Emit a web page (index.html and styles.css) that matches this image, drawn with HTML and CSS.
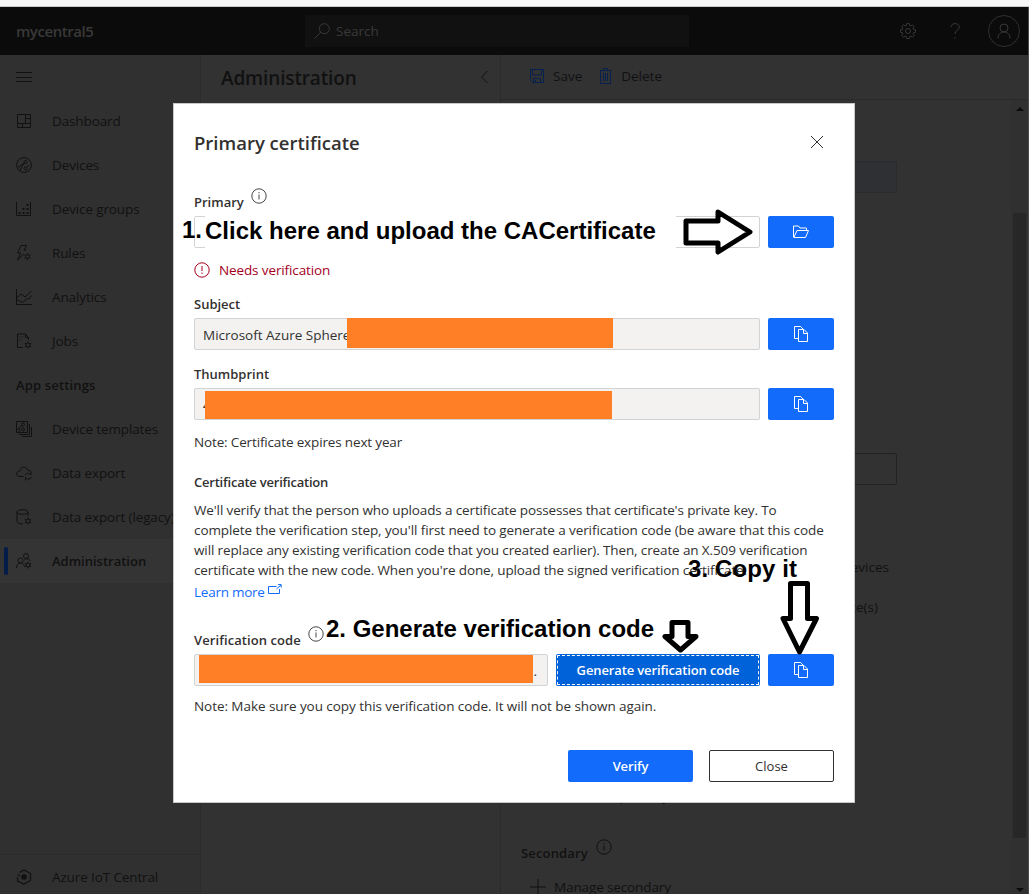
FILE: index.html
```html
<!DOCTYPE html>
<html lang="en">
<head>
<meta charset="utf-8">
<title>mycentral5 - Administration</title>
<link rel="stylesheet" href="styles.css">
</head>
<body>
<svg class="defs" width="0" height="0">
  <symbol id="copy" viewBox="0 0 16 16"><path d="M5 12.500H1.500V.5h6l2 2M5.500 3.500h5.500l3.500 3.500v8.500h-9zM10.500 3.500v4h4M7.500.5l3 3"/></symbol>
  <symbol id="info" viewBox="0 0 16 16"><circle cx="8" cy="8" r="7.200"/><path d="M8 6.500v5M8 4v1.200"/></symbol>
  <symbol id="cog" viewBox="0 0 8 8"><circle cx="4" cy="4" r="2"/><path d="M4 .5V2M4 6v1.500M.9 2.200l1.300.8M5.800 5l1.300.8M.9 5.800l1.300-.8M5.800 3l1.300-.8"/></symbol>
</svg>
<div class="screen">
  <div class="browser-edge"></div>
  <header class="topbar">
    <span class="brand">mycentral5</span>
    <div class="search"><svg class="ic" viewBox="0 0 16 16"><circle cx="10.300" cy="5.700" r="5"/><path d="M6.800 9.200L.5 15.500"/></svg><span>Search</span></div>
    <div class="top-actions">
      <svg class="ic gear" viewBox="0 0 16 16"><circle cx="8" cy="8" r="2.500"/><path d="M6.700.6h2.600l.4 2 1 .4 1.700-1.100 1.800 1.800-1.200 1.700.5 1.100 2 .3v2.500l-2 .4-.5 1 1.200 1.700-1.800 1.800-1.700-1.100-1 .4-.4 2H6.700l-.4-2-1.100-.4-1.700 1.100-1.800-1.800 1.100-1.700-.4-1-2-.4V6.800l2-.3.4-1.100-1.100-1.700 1.800-1.800L5.200 3l1.100-.4z"/></svg>
      <svg class="ic help" viewBox="0 0 16 16"><path d="M4 4.200C4 2 5.500.6 8 .6s4.300 1.400 4.300 3.500C12.300 7.300 8 7 8 11M8 14v1.500"/></svg>
      <span class="avatar"><svg class="ic" viewBox="0 0 16 16"><circle cx="8" cy="5" r="4"/><path d="M2 15.500C2 11.500 4.500 9 8 9s6 2.500 6 6.500"/></svg></span>
    </div>
  </header>
  <div class="main">
    <nav class="sidebar">
      <div class="item"><svg class="ic" viewBox="0 0 16 16"><path d="M0 3.500h16M0 8.500h16M0 12.500h16"/></svg></div>
      <div class="item"><svg class="ic" viewBox="0 0 16 16"><path d="M1.500 1.500h13v13h-13zM9.500 1.500v9M1.500 10.500h13M9.500 5.500h5M6.500 10.500v4"/></svg><span>Dashboard</span></div>
      <div class="item"><svg class="ic" viewBox="0 0 16 16"><circle cx="8" cy="8" r="7.400"/><circle cx="9.500" cy="5" r="1.500"/><circle cx="9.500" cy="11.500" r="1.500"/><path d="M2 10.500L8.300 6M4 14l2-5 2.500-2.500M11 10.500l1.500-2.500"/></svg><span>Devices</span></div>
      <div class="item"><svg class="ic" viewBox="0 0 16 16"><path d="M.5 1v13.500h14V1"/><path class="dots" d="M2.500 12h2M6.500 12h2M10.500 12h2M6.500 8h2M10.500 8h2M10.500 4h2"/></svg><span>Device groups</span></div>
      <div class="item"><svg class="ic" viewBox="0 0 16 16"><path d="M5 .5h5.500L8 5h2.500M5 .5L1.500 8H5l-3.500 7L8 9"/><use href="#cog" x="7.500" y="7.500" width="8" height="8"/></svg><span>Rules</span></div>
      <div class="item"><svg class="ic" viewBox="0 0 16 16"><path d="M.5 0v15.500H16M.5 9l4.500-4 4 3 6.500-6M.5 10.500l6 3 5-4h2l2-3"/></svg><span>Analytics</span></div>
      <div class="item"><svg class="ic" viewBox="0 0 16 16"><path d="M7 14.500H1.500V1h8l3 3.500V7M9.500 1v3.500h3M3.500 4h1M6 4h1M3.500 7h1"/><use href="#cog" x="8" y="8" width="8" height="8"/></svg><span>Jobs</span></div>
      <div class="item section">App settings</div>
      <div class="item"><svg class="ic" viewBox="0 0 16 16"><path d="M.5.5h11v11H.5zM13.500 3v10.500H3M15.500 6v9.500H6"/><circle cx="7" cy="3.500" r="1.500"/><circle cx="7" cy="8.500" r="1.500"/><path d="M1 9l5-4.500M3 11l1-3"/></svg><span>Device templates</span></div>
      <div class="item"><svg class="ic" viewBox="0 0 16 16"><path d="M7.500 11.500H4C-.5 11.500-.5 6 4 6 4.500 1 11 1 12 5.500c1.500 0 3 .5 3.500 2M9 10.500c1-2.500 4-3 6-.5V7.500M15.500 12c-1 2.500-4 3-6 .5v3"/></svg><span>Data export</span></div>
      <div class="item"><svg class="ic" viewBox="0 0 16 16"><ellipse cx="6.500" cy="3" rx="5.500" ry="2.400"/><path d="M1 3v9.500C1 14 4 15 7 14.800M12 3v4"/><use href="#cog" x="8" y="8" width="8" height="8"/></svg><span>Data export (legacy)</span></div>
      <div class="item active"><svg class="ic" viewBox="0 0 16 16"><circle cx="10" cy="3" r="2.500"/><circle cx="4.500" cy="7.500" r="2.500"/><path d="M.5 15c0-6.500 7-6.500 8-1.500M8 7.500C9.500 5 13 5 14.500 8"/><use href="#cog" x="8" y="8" width="8" height="8"/></svg><span>Administration</span></div>
      <div class="item foot"><svg class="ic hub" viewBox="0 0 16 16"><path d="M1.500 8v4L8 15l6.500-3.500v-7L8 1 3.500 3.500M1.500 5.500L4 7"/><circle class="solid" cx="8" cy="8" r="2.800"/></svg><span>Azure IoT Central</span></div>
    </nav>
    <section class="subnav"><h1>Administration</h1><svg class="back" viewBox="0 0 8 14"><path d="M7.500 1L1.500 7l6 6"/></svg></section>
    <section class="content">
      <div class="toolbar">
        <svg class="ic blue" viewBox="0 0 16 16"><path d="M1.500 1.500h13v13h-11l-2-2zM3.500 1.500v5.500h9V1.500M4.500 14.500v-4h7v4M6.500 12v2.500"/></svg><span>Save</span>
        <svg class="ic blue del" viewBox="0 0 16 16"><path d="M2.500 2.500h12M6.500 2V.5h4V2M3.500 2.500v13h10v-13M6.500 5v8M8.500 5v8M10.500 5v8"/></svg><span>Delete</span>
      </div>
      <div class="pane">
        <div class="page-body">
          <div class="bg-input selected"></div>
          <div class="bg-input outlined"></div>
          <div class="bg-text devices">Auto-approve new devices</div>
          <div class="bg-text certs">Manage certificate(s)</div>
          <div class="bg-text primary">Delete primary</div>
          <div class="bg-label">Secondary <svg class="ic info"><use href="#info"/></svg></div>
          <div class="bg-manage"><svg class="ic" viewBox="0 0 16 16"><path d="M8 0v16M0 8h16"/></svg><span>Manage secondary</span></div>
        </div>
        <div class="scrollbar"><i class="up"></i><div class="thumb"></div><i class="down"></i></div>
      </div>
    </section>
  </div>
</div>

<div class="modal">
  <div class="modal-head"><h2>Primary certificate</h2><svg class="x" viewBox="0 0 14 14"><path d="M1 1l12 12M13 1L1 13"/></svg></div>
  <div class="label first"><span>Primary</span><svg class="ic info"><use href="#info"/></svg></div>
  <div class="row"><div class="field blank"></div><button class="btn icon"><svg class="ic" viewBox="0 0 16 16"><path d="M.5 13V2h5l1.500 2h6.500v2.500M.8 13.500L4 6.500h11.500l-3 7z"/></svg></button></div>
  <div class="error"><svg class="ic" viewBox="0 0 16 16"><circle cx="8" cy="8" r="7.200"/><path d="M8 4v5M8 10.500V12"/></svg><span>Needs verification</span></div>
  <div class="label"><span>Subject</span></div>
  <div class="row"><div class="field"><span>Microsoft Azure Sphere</span></div><button class="btn icon"><svg class="ic"><use href="#copy"/></svg></button></div>
  <div class="label thumbprint"><span>Thumbprint</span></div>
  <div class="row"><div class="field"><span>4</span></div><button class="btn icon"><svg class="ic"><use href="#copy"/></svg></button></div>
  <p class="note n1">Note: Certificate expires next year</p>
  <h3>Certificate verification</h3>
  <p class="copytext"><span class="l1">We'll verify that the person who uploads a certificate possesses that certificate's private key. To</span><br><span class="l2">complete the verification step, you'll first need to generate a verification code (be aware that this code</span><br><span class="l3">will replace any existing verification code that you created earlier). Then, create an X.509 verification</span><br><span class="l4">certificate with the new code. When you're done, upload the signed verification certificate.</span></p>
  <div class="learn"><span>Learn more</span><svg viewBox="0 0 14 12"><path d="M8.500 2.500H.5v7h11V5M8.500 5L13 1M10 .6h3.200v3"/></svg></div>
  <div class="label code"><span>Verification code</span><svg class="ic info"><use href="#info"/></svg></div>
  <div class="row"><div class="field codebox"><span>.</span></div><button class="btn generate"><span>Generate verification code</span></button><button class="btn icon"><svg class="ic"><use href="#copy"/></svg></button></div>
  <p class="note n2">Note: Make sure you copy this verification code. It will not be shown again.</p>
  <div class="actions"><button class="btn verify">Verify</button><button class="btn close">Close</button></div>
</div>

<div class="annotations">
  <div class="redact r1"></div><div class="redact r2"></div><div class="redact r3"></div>
  <div class="patch"></div>
  <span class="mark m1">1.</span><span class="mark m1b">Click here and upload the CACertificate</span>
  <span class="mark m2">2. Generate verification code</span>
  <span class="mark m3">3. Copy it</span>
  <svg class="arrows" viewBox="0 0 1029 894"><path d="M686 221h32v-9l32 20-32 20v-9h-32zM672 622.500h16v14h8L680.500 650 665 636.500h7zM790.500 583.500h17v35h9L799.500 652 783 618.500h7.500z"/></svg>
</div>
</body>
</html>
```
FILE: styles.css
```css
* { box-sizing: border-box; }
body { margin: 0; width: 1029px; height: 894px; overflow: hidden; position: relative; background: #323232; font: 13.5px/20px "Open Sans", "Noto Sans", sans-serif; letter-spacing: -.12px; color: #323130; }
h1, h2, h3, p { margin: 0; }
span, h1, h2, h3, p, button { white-space: nowrap; }
svg { fill: none; stroke: currentColor; stroke-width: 1; flex: none; }
.defs { position: absolute; }
.ic { width: 16px; height: 16px; }
.screen { height: 894px; display: flex; flex-direction: column; border-right: 1px solid #494949; color: #111; }
.browser-edge { height: 7px; background: #f7f7f7; border-bottom: 1px solid #c8cacc; flex: none; margin-right: -1px; }
.topbar { height: 48px; flex: none; background: #0b0b0b; color: #393939; display: flex; align-items: center; padding-left: 16px; }
.brand { width: 289px; font-size: 15px; font-weight: 600; letter-spacing: -.45px; }
.search { width: 384px; height: 32px; background: #111; display: flex; align-items: center; gap: 6px; padding-left: 9px; letter-spacing: 0; }
.top-actions { margin-left: auto; display: flex; align-items: center; gap: 32px; padding-right: 8px; }
.gear { margin-right: -1px; }
.avatar { width: 32px; height: 32px; border: 1px solid #303030; border-radius: 50%; display: grid; place-items: center; margin-left: -7px; }
.main { flex: 1; min-height: 0; display: flex; }
.sidebar { width: 201px; border-right: 1px solid #2c2c2c; background: #303030; display: flex; flex-direction: column; }
.item { height: 44px; flex: none; display: flex; align-items: center; gap: 20px; padding-left: 16px; overflow: hidden; }
.dots { stroke-width: 2; }
.section { font-weight: 600; font-size: 13px; letter-spacing: .15px; }
.active { background: #343434; font-weight: 600; font-size: 13px; position: relative; letter-spacing: 0; }
.active::before { content: ""; position: absolute; left: 4px; top: 8px; width: 4px; height: 28px; border-radius: 2px; background: #031c48; }
.foot { margin-top: auto; height: 40px; border-top: 1px solid #2b2b2b; padding-top: 4px; }
.hub { stroke-width: 1.200; }
.solid { fill: currentColor; stroke: none; }
.subnav { width: 300px; border-right: 1px solid #2b2b2b; height: 100%; padding: 11px 12px 0 20px; display: flex; justify-content: space-between; align-items: flex-start; }
h1 { font-size: 19px; line-height: 24px; font-weight: 600; letter-spacing: -.15px; }
.back { width: 8px; height: 14px; margin-top: 4px; }
.content { flex: 1; min-width: 0; display: flex; flex-direction: column; }
.toolbar { height: 45px; flex: none; border-bottom: 1px solid #2a2a2a; display: flex; align-items: center; gap: 8px; padding: 0 0 2px 28px; letter-spacing: 0; }
.blue { color: #06204f; }
.del { margin-left: 7px; }
.pane { flex: 1; min-height: 0; display: flex; justify-content: space-between; }
.page-body { width: 400px; padding: 61px 0 0 20px; overflow: hidden; }
.bg-input { width: 376px; height: 32px; border: 1px solid #292b2e; border-radius: 2px; }
.selected { background: #2e3034; }
.outlined { margin-top: 260px; border-color: #222; }
.bg-text { width: 368px; height: 20px; text-align: right; letter-spacing: 0; }
.devices { margin-top: 72px; }
.certs { margin-top: 20px; width: 357px; }
.primary { width: 148px; margin-top: 169px; }
.bg-label { margin-top: 37px; height: 20px; font-weight: 600; font-size: 13px; letter-spacing: .15px; display: flex; gap: 8px; }
.bg-label .ic { margin-top: -4px; }
.bg-manage { display: flex; gap: 8px; padding-left: 9px; margin-top: 14px; align-items: center; }
.scrollbar { width: 17px; background: #303030; display: flex; flex-direction: column; align-items: center; padding-top: 7px; }
.up, .down { border: 4px solid transparent; border-top: 0; border-bottom-color: #0b0b0b; height: 4px; }
.down { border-bottom: 0; border-top: 4px solid #0b0b0b; margin-top: 50px; }
.thumb { width: 13px; height: 625px; background: #272727; margin-top: 102px; flex: none; }

.modal { position: absolute; left: 173px; top: 103px; width: 682px; height: 700px; background: #fff; border: 1px solid #c8c8c8; padding: 19px 20px 0; display: flex; flex-direction: column; }
.modal-head { height: 40px; display: flex; justify-content: space-between; align-items: center; padding-right: 10px; }
h2 { font-size: 18.5px; font-weight: 600; letter-spacing: 0; color: #323130; }
.x { width: 14px; height: 14px; margin-top: -2px; }
.label { height: 28px; line-height: 28px; font-weight: 600; font-size: 13px; letter-spacing: 0; display: flex; gap: 7px; margin-top: 10px; }
.first { margin-top: 25px; }
.label .info { width: 16px; height: 16px; stroke-width: .9; }
.code { margin-top: 24px; letter-spacing: .08px; }
.row { height: 32px; display: flex; gap: 8px; }
.field { flex: 1; background: #f3f2f1; border: 1px solid #d2d3d4; border-radius: 2px; padding: 6px 8px; letter-spacing: 0; }
.blank { background: #fff; }
.codebox { display: flex; justify-content: flex-end; padding-right: 10px; }
.btn { background: #136bfb; color: #fff; border: 0; border-radius: 2px; height: 32px; padding: 0; font: 600 13px "Open Sans", sans-serif; letter-spacing: -.13px; display: flex; align-items: center; justify-content: center; }
.icon { width: 66px; }
.error { color: #a4001d; height: 20px; margin-top: 12px; display: flex; gap: 9px; align-items: center; }
.note { margin-top: 12px; }
.n1 { letter-spacing: -.15px; }
h3 { font-size: 13px; line-height: 20px; font-weight: 600; margin-top: 20px; letter-spacing: -.22px; }
.copytext { margin-top: 8px; height: 80px; }
.l1 { letter-spacing: -.13px; }
.l2 { letter-spacing: -.09px; }
.l4 { letter-spacing: -.13px; }
.learn { color: #136bfb; margin-top: 2px; display: flex; gap: 3px; letter-spacing: -.25px; }
.learn svg { width: 14px; height: 12px; margin-top: 2px; }
.generate { width: 204px; background: #0062d9; outline: 1px dashed #fff; outline-offset: -2px; }
.n2 { margin-top: 10px; letter-spacing: -.06px; }
.actions { margin-top: 34px; display: flex; justify-content: flex-end; gap: 16px; }
.verify, .close { width: 125px; }
.close { background: #fff; color: #323130; border: 1px solid #323130; font-weight: 400; letter-spacing: 0; }

.annotations { position: absolute; inset: 0; }
.redact { position: absolute; background: #ff7f27; }
.r1 { left: 347px; top: 318px; width: 266px; height: 30px; }
.r2 { left: 205px; top: 391px; width: 407px; height: 28px; }
.r3 { left: 199px; top: 655px; width: 334px; height: 28px; }
.patch { position: absolute; left: 205px; top: 214px; width: 471px; height: 36px; background: #fff; }
.mark { position: absolute; color: #000; font: bold 24px/28px "Liberation Sans", Arial, sans-serif; letter-spacing: 0; }
.m1 { left: 182px; top: 216px; }
.m1b { left: 205px; top: 217px; }
.m2 { left: 326px; top: 615px; }
.m3 { left: 688px; top: 555px; letter-spacing: .1px; }
.arrows { position: absolute; inset: 0; width: 1029px; height: 894px; color: #000; stroke-width: 5; stroke-linejoin: round; fill: #fff; }
```
